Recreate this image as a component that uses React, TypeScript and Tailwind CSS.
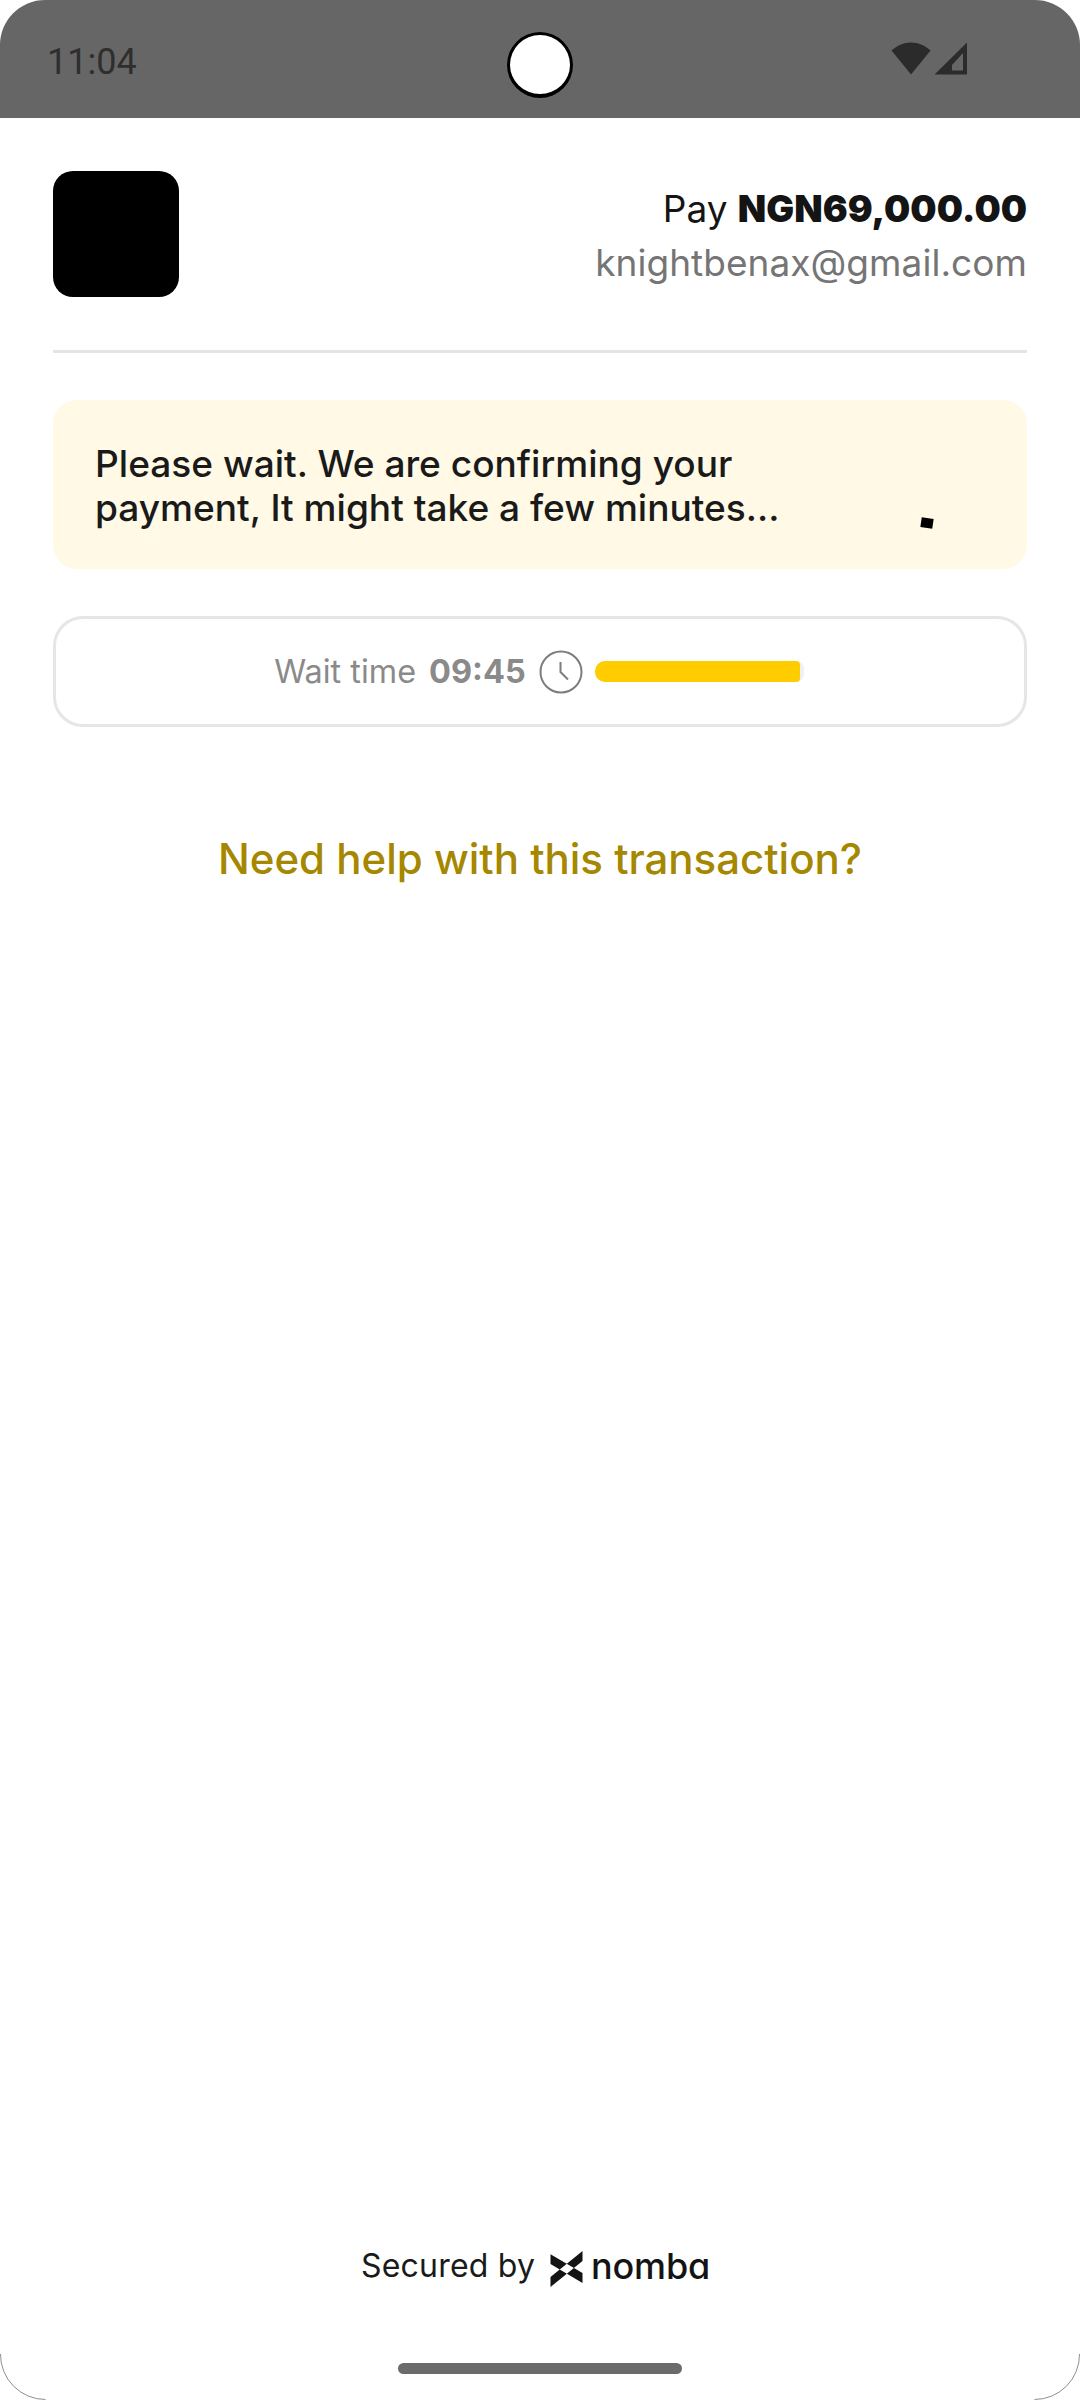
const Corner = ({ className }: { className: string }) => (
  <svg className={className} width="46" height="46" viewBox="0 0 46 46" fill="none">
    <path d="M0.5 0 A45 45 0 0 0 45.5 45.5" stroke="#8f8f8f" strokeWidth="1" />
  </svg>
);

const StatusBar = () => (
  <div className="relative flex h-[118px] shrink-0 items-start justify-between rounded-t-[45px] bg-[#666666] pl-[47px] pr-[113px] pt-[39px]">
    <span className="font-['Roboto',sans-serif] text-[36px] leading-[46px] text-[#2e2e2e]">11:04</span>
    <div className="absolute left-[507px] top-[32px] h-[66px] w-[66px] rounded-full border-[3px] border-b-[4px] border-black bg-white" />
    <div className="mt-[3px] flex items-start gap-[3px]">
      <svg width="40" height="33" viewBox="0 0 40 33">
        <path d="M20 32.5 L0.5 8.5 C6 3.5 12.5 0.5 20 0.5 C27.5 0.5 34 3.5 39.5 8.5 Z" fill="#2b2b2b" />
      </svg>
      <svg width="33" height="33" viewBox="0 0 33 33">
        <path fillRule="evenodd" d="M33 0.5 V32.5 H0.5 Z M29 11 L18 23 V28.5 H29 Z" fill="#2b2b2b" />
      </svg>
    </div>
  </div>
);

export default function App() {
  return (
    <div className="relative flex h-[2400px] w-[1080px] flex-col overflow-hidden bg-white font-['Inter',sans-serif]">
      <StatusBar />

      <main className="flex flex-1 flex-col px-[53px]">
        <header className="flex items-start justify-between border-b-[3px] border-[#e4e4e4] pb-[53px] pt-[53px]">
          <div className="h-[126px] w-[126px] rounded-[20px] bg-black" />
          <div className="pt-[15px] text-right">
            <p className="text-[37px] leading-[46px] text-[#141414]">
              Pay <span className="font-black">NGN69,000.00</span>
            </p>
            <p className="mt-[9px] text-[37px] leading-[44px] tracking-[0.05px] text-[#757575]">knightbenax@gmail.com</p>
          </div>
        </header>

        <div className="relative mt-[47px] h-[169px] rounded-[24px] bg-[#fff9e5] px-[42px] pt-[42px]">
          <p className="text-[37.1px] font-[450] leading-[44px] text-[#1a1a1a]">
            Please wait. We are confirming your
            <br />
            payment, It might take a few minutes...
          </p>
          <div className="absolute left-[868px] top-[118px] h-[10px] w-[12px] rotate-[8deg] bg-black" />
        </div>

        <div className="mt-[47px] flex h-[111px] items-center justify-center rounded-[30px] border-[3px] border-[#e6e6e6] pr-[2px] text-[#8a8a8a]">
          <span className="pt-[2px] text-[32.4px]">Wait time</span>
          <span className="ml-[13px] pt-[2px] text-[32.5px] font-bold">09:45</span>
          <svg className="ml-[13px]" width="44" height="44" viewBox="0 0 44 44" fill="none" stroke="#7d7d7d" strokeWidth="2">
            <circle cx="22" cy="22" r="20.5" />
            <path d="M21.5 12 V22 L29 29.5" />
          </svg>
          <div className="ml-[12px] h-[21px] w-[209px] rounded-l-[10px] rounded-r-[8px] bg-[#eef0f5]">
            <div className="h-full w-[205px] rounded-l-[10px] rounded-r-[4px] bg-[#ffcc00]" />
          </div>
        </div>

        <p className="mt-[107px] text-center text-[42px] font-[450] leading-[50px] text-[#a58700]">
          Need help with this transaction?
        </p>

        <footer className="mt-auto flex items-center justify-center gap-[15px] pb-[76px] pr-[9px]">
          <span className="text-[32px] leading-[40px] tracking-[0.2px] text-[#1a1a1a]">Secured by</span>
          <div className="flex items-center gap-[8px]">
            <svg width="33" height="36" viewBox="0 0 32 36" className="mt-[6px]">
              <path d="M0 3.3 L32 22 V32 L0 13 Z M32 0 L0 26 V36 L32 10 Z" fill="#141414" />
            </svg>
            <span className="text-[36px] font-medium leading-[36px] tracking-[-0.2px] text-[#141414] [font-feature-settings:'cv11']">nomba</span>
          </div>
        </footer>
      </main>

      <div className="flex h-[37px] shrink-0 justify-center">
        <div className="h-[11px] w-[284px] rounded-full bg-[#6b6b6b]" />
      </div>

      <Corner className="absolute bottom-0 left-0" />
      <Corner className="absolute bottom-0 right-0 -scale-x-100" />
    </div>
  );
}
